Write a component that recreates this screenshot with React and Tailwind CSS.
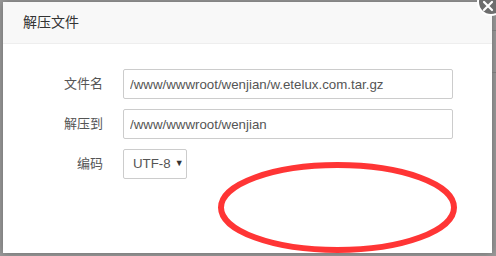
import { useState } from 'react'

const FONT = "font-['Liberation_Sans','Noto_Sans_CJK_SC',sans-serif]"

// --- Form row ---
const Row = ({ label, children }) => (
  <div className="flex items-center">
    <label className="w-[120px] pr-[20px] text-right text-[13px] text-[#555]">{label}</label>
    {children}
  </div>
)

export default function App() {
  const [fileName, setFileName] = useState('/www/wwwroot/wenjian/w.etelux.com.tar.gz')
  const [target, setTarget] = useState('/www/wwwroot/wenjian')
  const [encoding, setEncoding] = useState('UTF-8')

  return (
    <div className={`relative h-[256px] w-[496px] overflow-hidden bg-[#9a9a9a] ${FONT}`}>
      {/* right strip marks from page behind */}
      <div className="absolute top-[30px] right-0 h-px w-[4px] bg-[#7a7a7a]" />
      <div className="absolute top-[72px] right-0 h-px w-[4px] bg-[#7a7a7a]" />

      <div className="ml-[3px] mt-[2px] flex h-[251px] w-[489px] flex-col bg-white shadow-[0_0_8px_rgba(0,0,0,0.3)]">
        {/* Header */}
        <div className="flex h-[42px] shrink-0 items-center border-b border-[#eee] bg-[#f8f8f8] pl-[20px] text-[14px] text-[#333]">
          解压文件
        </div>

        {/* Body */}
        <div className="flex flex-col gap-[10px] pt-[25px]">
          <Row label="文件名">
            <input
              value={fileName}
              onChange={(e) => setFileName(e.target.value)}
              className="h-[30px] w-[330px] rounded-[2px] border border-[#ccc] px-[6px] text-[13.3px] text-[#555] outline-none"
            />
          </Row>
          <Row label="解压到">
            <input
              value={target}
              onChange={(e) => setTarget(e.target.value)}
              className="h-[30px] w-[330px] rounded-[2px] border border-[#ccc] px-[6px] text-[13.3px] text-[#555] outline-none"
            />
          </Row>
          <Row label="编码">
            <div className="flex h-[30px] w-[64px] items-center gap-[4px] rounded-[2px] border border-[#ccc] pl-[9px] text-[13.3px] text-[#555]">
              <span>{encoding}</span>
              <span className="text-[9px] text-[#333]" onClick={() => setEncoding(encoding)}>▼</span>
            </div>
          </Row>
        </div>
      </div>

      {/* Close button */}
      <div className="absolute top-[-12px] left-[477px] flex h-[28px] w-[28px] items-center justify-center rounded-full border-2 border-white bg-[#6d6d6d]">
        <svg width="12" height="12" viewBox="0 0 12 12" className="mt-[8px] mr-[6px]">
          <path d="M2 2L10 10M10 2L2 10" stroke="white" strokeWidth="2.2" strokeLinecap="round" />
        </svg>
      </div>

      {/* Red annotation ellipse */}
      <svg className="absolute top-[160px] left-[216px]" width="244" height="96" viewBox="0 0 244 96">
        <ellipse cx="121.5" cy="47.5" rx="116.5" ry="42.5" fill="none" stroke="#ff3535" strokeWidth="6" />
      </svg>
    </div>
  )
}
